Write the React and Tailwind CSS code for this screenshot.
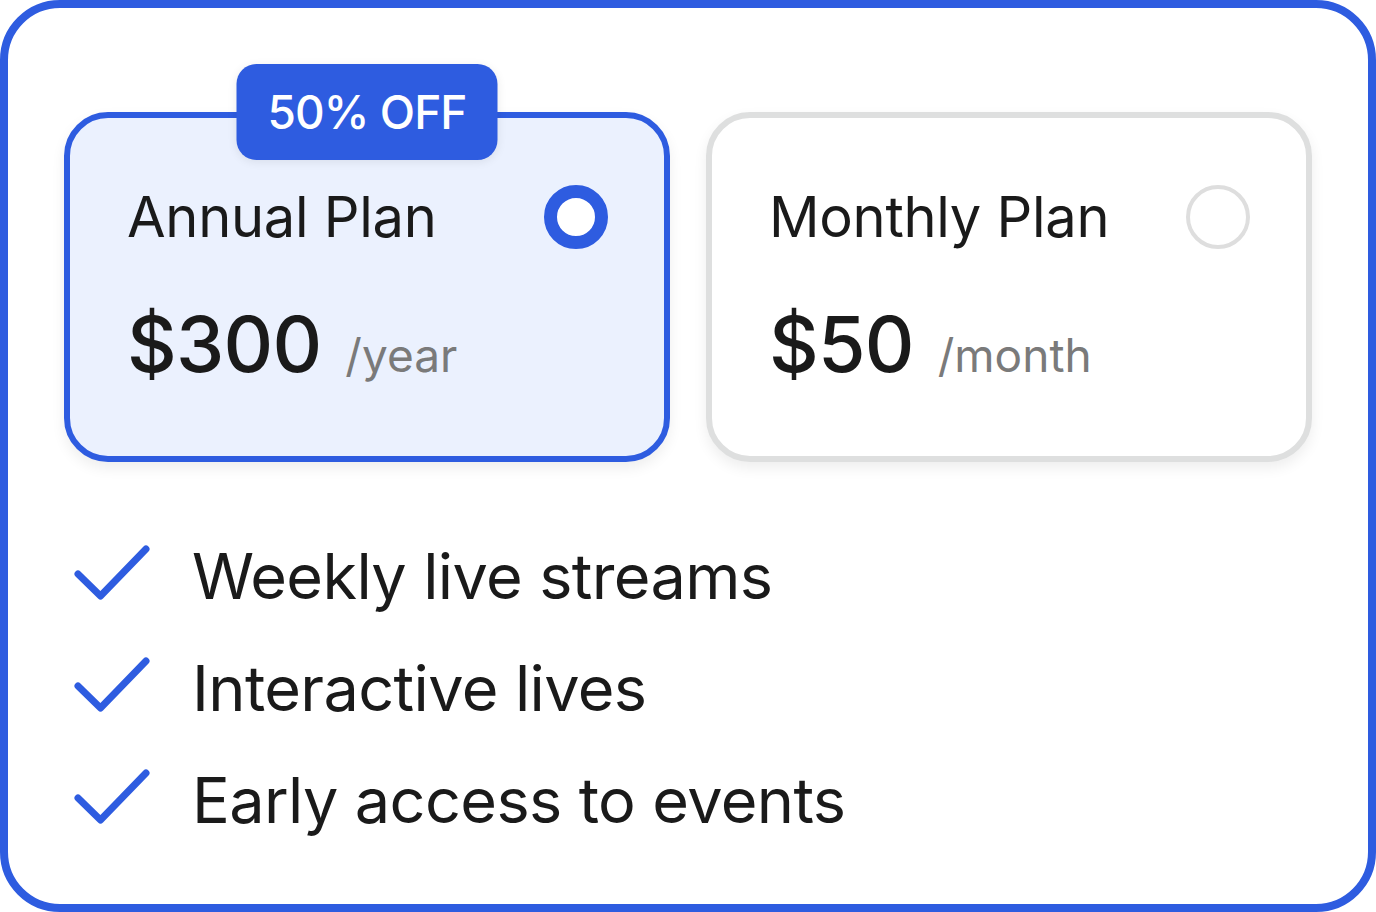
import React from 'react';

const features = ['Weekly live streams', 'Interactive lives', 'Early access to events'];

const CheckIcon = () => (
  <svg className="w-[96px] h-[72px] shrink-0" viewBox="0 0 96 72" fill="none">
    <path
      d="M14 34 L36.5 56 L82 9"
      stroke="#2E5CE0"
      strokeWidth="7"
      strokeLinecap="round"
      strokeLinejoin="round"
    />
  </svg>
);

const PlanCard = ({ title, price, period, selected, badge }) => (
  <div
    className={`relative rounded-[44px] border-[6px] pl-[57px] pr-[56px] pt-[67px] pb-[73px] ${
      selected
        ? 'border-[#2E5CE0] bg-[#EBF1FE] shadow-[0_6px_14px_rgba(0,0,0,0.07)]'
        : 'border-[#DEDFDF] bg-white shadow-[0_6px_14px_rgba(0,0,0,0.07)]'
    }`}
  >
    {badge && (
      <div className="absolute left-1/2 -translate-x-1/2 top-[-54px] w-[261px] h-[96px] rounded-[20px] bg-[#2E5CE0] flex items-center justify-center shadow-[0_2px_10px_rgba(0,0,0,0.08)]">
        <span className="text-white text-[46px] font-medium leading-none tracking-[-0.02em]">{badge}</span>
      </div>
    )}
    <div className="flex items-center justify-between h-16">
      <span className="text-[56px] leading-none text-[#1A1A1A] tracking-[-0.005em]">{title}</span>
      {selected ? (
        <div className="w-16 h-16 rounded-full border-[13px] border-[#2E5CE0] bg-white" />
      ) : (
        <div className="w-16 h-16 rounded-full border-4 border-[#DEDEDE] bg-white" />
      )}
    </div>
    <div className="mt-[57px] flex items-baseline">
      <span className="text-[77px] leading-none font-medium text-[#1A1A1A] tracking-[-0.01em]">{price}</span>
      <span className="ml-6 text-[46px] leading-none text-[#7A7A7A]">{period}</span>
    </div>
  </div>
);

export default function App() {
  return (
    <div
      className="w-[1376px] h-[912px] bg-white border-8 border-[#2E5CE0] rounded-[60px] pt-[104px] px-[56px] pb-[66px]"
      style={{ fontFamily: 'Inter, "Noto Sans", sans-serif' }}
    >
      <div className="grid grid-cols-2 gap-9">
        <PlanCard title="Annual Plan" price="$300" period="/year" selected badge="50% OFF" />
        <PlanCard title="Monthly Plan" price="$50" period="/month" />
      </div>
      <div className="mt-[78px] flex flex-col gap-10">
        {features.map((f) => (
          <div key={f} className="flex items-center gap-8 h-[72px]">
            <CheckIcon />
            <span className="text-[63px] leading-[72px] text-[#1A1A1A] tracking-[-0.01em]">{f}</span>
          </div>
        ))}
      </div>
    </div>
  );
}
